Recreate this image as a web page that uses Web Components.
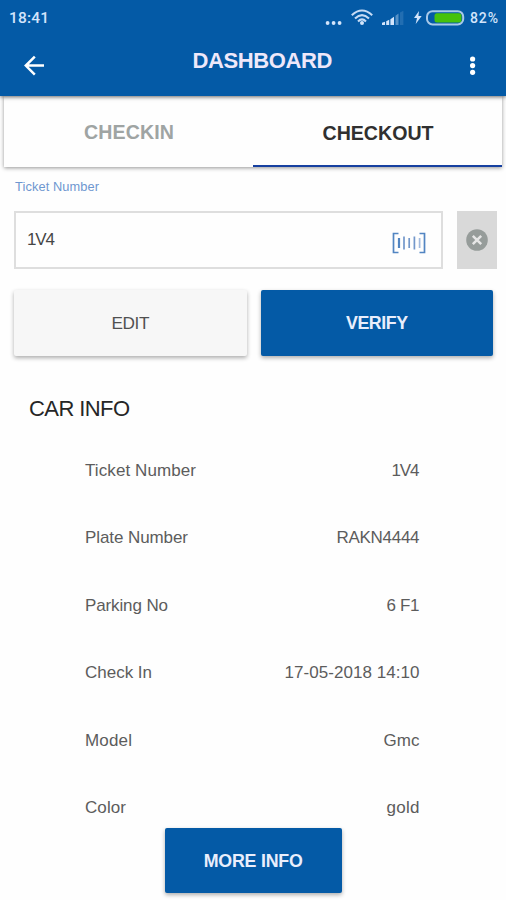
<!DOCTYPE html>
<html lang="en">
<head>
<meta charset="utf-8">
<title>Dashboard</title>
<style>
html,body{margin:0;background:#fefefe;font-family:"Liberation Sans",Arial,sans-serif;color:#484848}
</style>
</head>
<body>
<parking-app></parking-app>
<script>
/* A single line of text, tracked so that it spans the width in its "w" attribute. */
class FitText extends HTMLElement {
  constructor(){
    super();
    this.attachShadow({mode:'open'}).innerHTML = `<style>
      :host{display:inline-block;white-space:pre;line-height:24px}
      span{display:inline-block}
    </style><span><slot></slot></span>`;
  }
  connectedCallback(){
    const span = this.shadowRoot.querySelector('span');
    const n = this.textContent.length;
    const gap = (Number(this.getAttribute('w')) - span.getBoundingClientRect().width) / (n - 1);
    span.style.letterSpacing = gap + 'px';
    span.style.marginRight = -gap + 'px';
  }
}

class StatusBar extends HTMLElement {
  constructor(){
    super();
    this.attachShadow({mode:'open'}).innerHTML = `<style>
      :host{display:flex;justify-content:space-between;align-items:center;height:36px;padding:0 8px 0 9px;color:#d3e4fb;font:500 15.5px Roboto,sans-serif}
      .right{display:flex;align-items:center;font-size:14px}
      svg{display:block}
    </style>
    <fit-text w="40">18:41</fit-text>
    <div class="right">
      <svg width="146" height="36" viewBox="0 0 146 36" fill="none">
        <g fill="#d3e4fb"><circle cx="3.6" cy="23" r="1.9"/><circle cx="9.6" cy="23" r="1.9"/><circle cx="15.6" cy="23" r="1.9"/></g>
        <g stroke="#c6dbf5" stroke-width="2.1"><path d="M27.8 15.2Q38 5.8 48.2 15.2"/><path d="M31 18.4Q38 11.8 45 18.4"/><path d="M34 21.4Q38 17.4 42 21.4"/></g>
        <circle cx="38" cy="23" r="2" fill="#d3e4fb"/>
        <g fill="#d3e4fb"><path d="M58 25v-2.3l3-.9V25zM62.2 25v-3.8l3-1.4V25zM66.4 25v-5.8l3.6-2.5V25z"/><path d="M71.5 25V15.8l3-2.3V25z" opacity=".4"/><path d="M76 25V12.6l3.4-1.8V25z" opacity=".15"/></g>
        <path d="M95 11l-5 7h3l-1.3 6 6-8h-3.3z" fill="#d3e4fb"/>
        <rect x="103" y="11.2" width="36.2" height="13.2" rx="5.5" stroke="#a9c9e9" stroke-width="2"/>
        <rect x="110.5" y="13.2" width="27" height="9.4" rx="2.5" fill="#46c20c"/>
      </svg>
      <fit-text w="28">82%</fit-text>
    </div>`;
  }
}

class AppHeader extends HTMLElement {
  constructor(){
    super();
    this.attachShadow({mode:'open'}).innerHTML = `<style>
      :host{display:block;height:95.5px;background:#045aa6;box-shadow:0 1px 4px rgba(0,0,0,.6);position:relative;z-index:1}
      .bar{display:grid;grid-template-columns:68px 1fr 68px;height:59px;align-items:center}
      .title{text-align:center;color:#eee8fa;font-size:22px;font-weight:700;line-height:24px;padding:0 0 10px 19px}
      svg{display:block}
      .more{justify-self:end}
    </style>
    <status-bar></status-bar>
    <div class="bar">
      <svg width="68" height="59" viewBox="0 0 68 59" fill="none" stroke="#fff" stroke-width="2.5"><path d="M44 29.6H26M34.8 20.6l-9 9 9 9"/></svg>
      <div class="title"><fit-text w="140">DASHBOARD</fit-text></div>
      <svg class="more" width="68" height="59" viewBox="0 0 68 59" fill="#fff"><circle cx="34.6" cy="23" r="2.6"/><circle cx="34.6" cy="29.6" r="2.6"/><circle cx="34.6" cy="36.3" r="2.6"/></svg>
    </div>`;
  }
}

class TabBar extends HTMLElement {
  constructor(){
    super();
    this.attachShadow({mode:'open'}).innerHTML = `<style>
      :host{display:grid;grid-template-columns:249px 1fr;height:71.5px;margin:0 4px;background:#fefefe;box-shadow:0 1px 4px rgba(0,0,0,.42);font-size:19.6px;font-weight:700}
      div{box-sizing:border-box;display:flex;justify-content:center}
      .off{color:#9fa4a3;padding:24px 0 0 1px}
      .on{color:#303030;padding:25px 0 0 1px;border-bottom:2.5px solid #1640a0}
    </style>
    <div class="off"><fit-text w="90">CHECKIN</fit-text></div>
    <div class="on"><fit-text w="111">CHECKOUT</fit-text></div>`;
  }
}

class TicketField extends HTMLElement {
  constructor(){
    super();
    this.attachShadow({mode:'open'}).innerHTML = `<style>
      :host{display:block;padding:8px 9px 0 14px}
      .label{display:block;color:#6e97d0;font-size:12.8px;height:24px;margin-bottom:11.5px;padding-left:1px}
      .row{display:flex;gap:14px;height:58px}
      .box{flex:1;box-sizing:border-box;border:2px solid #dedede;display:flex;justify-content:space-between;align-items:flex-start;padding:15px 0 0 11px;font-size:17px;color:#464646}
      .clear{width:40px;background:#d9d9d9;display:grid;place-items:center}
      svg{display:block}
    </style>
    <div class="label"><fit-text w="84">Ticket Number</fit-text></div>
    <div class="row">
      <div class="box"><fit-text w="28">1V4</fit-text>
        <svg width="50" height="30" viewBox="0 0 50 30" fill="none" stroke="#5285c2" stroke-width="1.7"><path d="M7.5 5.5H2.5v19h5M28.5 5.5h5v19h-5"/><path d="M8 10v10" stroke-width="2.2"/><path d="M13 8.5v13M18.2 10v10M23.4 8.5v13" stroke="#7397ca"/><path d="M28.6 10v10" stroke="#a2bade"/></svg>
      </div>
      <div class="clear"><svg width="22" height="22" viewBox="0 0 22 22"><circle cx="11" cy="11" r="10.8" fill="#969c9a"/><path d="M6.8 6.8l8.4 8.4M15.2 6.8l-8.4 8.4" stroke="#e6e6e6" stroke-width="2.5"/></svg></div>
    </div>`;
  }
}

class RaisedButton extends HTMLElement {
  constructor(){
    super();
    this.attachShadow({mode:'open'}).innerHTML = `<style>
      :host{box-sizing:border-box;display:flex;align-items:center;justify-content:center;height:65.5px;border-radius:2px;background:#f7f7f7;color:#505050;font-size:17.2px;box-shadow:0 2px 4px rgba(0,0,0,.32)}
      :host([primary]){background:#045aa6;color:#e9eefc;font-weight:700;font-size:17.8px}
    </style><slot></slot>`;
  }
}

class InfoRow extends HTMLElement {
  constructor(){
    super();
    this.attachShadow({mode:'open'}).innerHTML = `<style>
      :host{display:flex;align-items:center;justify-content:space-between;height:67.5px;padding:0 86.5px 0 85px;font-size:17px;color:#5c5c5c}
    </style><slot name="key"></slot><slot name="value"></slot>`;
  }
}

class ParkingApp extends HTMLElement {
  constructor(){
    super();
    const rows = [['Ticket Number',111,'1V4',28],['Plate Number',103,'RAKN4444',83],['Parking No',83,'6 F1',33],['Check In',67,'17-05-2018 14:10',135],['Model',47,'Gmc',36],['Color',41,'gold',33]];
    this.attachShadow({mode:'open'}).innerHTML = `<style>
      :host{display:block;width:506px;height:900px;overflow:hidden;background:#fefefe}
      .actions{display:grid;grid-template-columns:233px 232px;gap:14px;padding:21.5px 14px 0}
      h2{margin:41.5px 0 0 29px;height:40px;font-size:22px;font-weight:400;color:#262626;line-height:24px}
      .more{position:absolute;left:165px;top:827.5px;width:176.5px;padding-top:1px}
    </style>
    <app-header></app-header>
    <tab-bar></tab-bar>
    <ticket-field></ticket-field>
    <div class="actions">
      <raised-button><fit-text w="38">EDIT</fit-text></raised-button>
      <raised-button primary><fit-text w="62">VERIFY</fit-text></raised-button>
    </div>
    <h2><fit-text w="101">CAR INFO</fit-text></h2>
    ${rows.map(([k,kw,v,vw]) => `<info-row><fit-text slot="key" w="${kw}">${k}</fit-text><fit-text slot="value" w="${vw}">${v}</fit-text></info-row>`).join('')}
    <raised-button primary class="more"><fit-text w="99">MORE INFO</fit-text></raised-button>`;
  }
}
customElements.define('status-bar', StatusBar);
customElements.define('app-header', AppHeader);
customElements.define('tab-bar', TabBar);
customElements.define('ticket-field', TicketField);
customElements.define('raised-button', RaisedButton);
customElements.define('info-row', InfoRow);
customElements.define('parking-app', ParkingApp);
customElements.define('fit-text', FitText);
</script>
</body>
</html>
